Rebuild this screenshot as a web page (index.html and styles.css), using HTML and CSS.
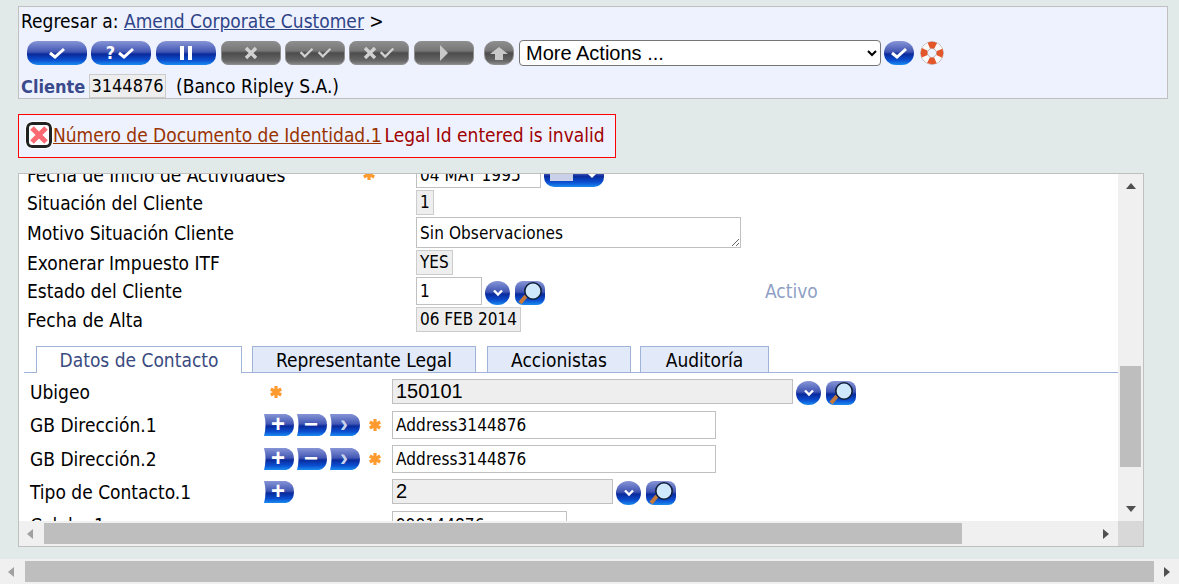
FILE: index.html
```html
<!DOCTYPE html>
<html>
	<head>
		<meta charset="utf-8">
		<title>Amend Corporate Customer</title>
		<link rel="stylesheet" href="styles.css">
	</head>
	<body>
		<svg class="sprite" width="0" height="0">
			<defs>
				<linearGradient id="blue-grad" x1="0" y1="0" x2="0" y2="1">
					<stop offset="0" stop-color="#8795d6"/>
					<stop offset="0.45" stop-color="#4257b4"/>
					<stop offset="0.55" stop-color="#0a2a9c"/>
					<stop offset="0.8" stop-color="#0b4fd0"/>
					<stop offset="1" stop-color="#1a8cf0"/>
				</linearGradient>
			</defs>
			<symbol id="check" viewBox="0 0 20 14"><path d="M3 7l5 4 9-8" fill="none" stroke="#fff" stroke-width="3"/></symbol>
			<symbol id="check-grey" viewBox="0 0 20 14"><path d="M3 6l5 5 9-9" fill="none" stroke="#cfcfcf" stroke-width="2.6"/></symbol>
			<symbol id="cross" viewBox="0 0 14 14"><path d="M2 2l10 10M12 2L2 12" fill="none" stroke="#d0d0d0" stroke-width="3.4"/></symbol>
			<symbol id="star" viewBox="0 0 14 14"><path d="M7 1v12M1.8 4l10.4 6M12.2 4L1.8 10" fill="none" stroke="#ff9a2e" stroke-width="3.2"/></symbol>
			<symbol id="chevron" viewBox="0 0 14 10"><path d="M3 2.5l4 4 4-4" fill="none" stroke="#fff" stroke-width="2.4"/></symbol>
			<symbol id="lens" viewBox="0 0 30 24">
				<path d="M11 15l-6 7" stroke="#c9793a" stroke-width="4"/>
				<circle cx="18" cy="10" r="8.2" fill="#cfe8fb" stroke="#10203c" stroke-width="1.6"/>
			</symbol>
			<symbol id="tab-shape" viewBox="0 0 30 24"><path d="M0 1h22q8 2 8 11t-8 11H0q3-11 0-22z" fill="url(#blue-grad)"/></symbol>
			<symbol id="buoy" viewBox="0 0 24 24">
				<circle cx="12" cy="12" r="11.3" fill="none" stroke="#b9aca6" stroke-width="1"/>
				<circle cx="12" cy="12" r="4.6" fill="none" stroke="#b9aca6" stroke-width="1"/>
				<circle cx="12" cy="12" r="8" fill="none" stroke="#fafafa" stroke-width="6"/>
				<circle cx="12" cy="12" r="8" fill="none" stroke="#e2562a" stroke-width="6.4" stroke-dasharray="7 5.57" stroke-dashoffset="3.5"/>
			</symbol>
		</svg>

		<div class="top-box">
			<div class="crumb">Regresar a: <a href="#" class="crumb-link">Amend Corporate Customer</a> &gt;</div>
			<div class="toolbar">
				<span class="pill blue"><svg width="20" height="14"><use href="#check"/></svg></span>
				<span class="pill blue"><span class="q">?</span><svg width="20" height="14"><use href="#check"/></svg></span>
				<span class="pill blue nudge"><span class="pause"></span></span>
				<span class="pill grey nudge"><svg width="14" height="14"><use href="#cross"/></svg></span>
				<span class="pill grey"><svg width="17" height="14"><use href="#check-grey"/></svg><svg width="17" height="14"><use href="#check-grey"/></svg></span>
				<span class="pill grey"><svg width="14" height="14"><use href="#cross"/></svg><svg width="18" height="14"><use href="#check-grey"/></svg></span>
				<span class="pill grey nudge"><span class="play"></span></span>
				<span class="pill grey round up-btn"><span class="up-arrow"></span></span>
				<select class="more-select"><option>More Actions ...</option></select>
				<span class="pill blue round go-btn"><svg width="20" height="14"><use href="#check"/></svg></span>
				<svg class="buoy" width="24" height="24"><use href="#buoy"/></svg>
			</div>
			<div class="client-row">
				<span class="client-label">Cliente</span>
				<span class="client-id">3144876</span>
				<span class="client-name">(Banco Ripley S.A.)</span>
			</div>
		</div>

		<div class="error-box">
			<span class="error-icon"><svg width="20" height="20" viewBox="0 0 20 20"><path d="M3 3l14 14M17 3L3 17" stroke="#fb6a72" stroke-width="5"/></svg></span>
			<a href="#" class="error-link">Número de Documento de Identidad.1</a>
			<span class="error-text">Legal Id entered is invalid</span>
		</div>

		<div class="panel">
			<div class="view">
				<div class="upper">
					<div class="row clipped">
						<span class="lbl">Fecha de Inicio de Actividades</span>
						<span class="mid"><svg class="star" width="14" height="14"><use href="#star"/></svg></span>
						<span class="val">
							<input class="inp w125" value="04 MAY 1995" readonly>
							<span class="pill blue cal"><span class="cal-sheet"></span><span class="cal-drop"></span></span>
						</span>
					</div>
					<div class="row h25">
						<span class="lbl">Situación del Cliente</span><span class="mid"></span>
						<span class="val"><span class="ro">1</span></span>
					</div>
					<div class="row h31">
						<span class="lbl">Motivo Situación Cliente</span><span class="mid"></span>
						<span class="val"><textarea class="motivo" readonly>Sin Observaciones</textarea></span>
					</div>
					<div class="row h25">
						<span class="lbl">Exonerar Impuesto ITF</span><span class="mid"></span>
						<span class="val"><span class="ro">YES</span></span>
					</div>
					<div class="row h28">
						<span class="lbl">Estado del Cliente</span><span class="mid"></span>
						<span class="val">
							<input class="inp w66" value="1" readonly>
							<span class="pill blue round drop"><svg width="14" height="10"><use href="#chevron"/></svg></span>
							<span class="pill blue mag"><svg width="30" height="24"><use href="#lens"/></svg></span>
							<span class="activo">Activo</span>
						</span>
					</div>
					<div class="row h25">
						<span class="lbl">Fecha de Alta</span><span class="mid"></span>
						<span class="val"><span class="ro">06 FEB 2014</span></span>
					</div>
				</div>

				<div class="tabs">
					<span class="tab active t1">Datos de Contacto</span>
					<span class="tab t2">Representante Legal</span>
					<span class="tab t3">Accionistas</span>
					<span class="tab t4">Auditoría</span>
				</div>

				<div class="lower">
					<div class="row2 h26">
						<span class="lbl">Ubigeo</span>
						<span class="mid2"><svg class="star first" width="14" height="14"><use href="#star"/></svg></span>
						<span class="val2">
							<span class="ro-big w401">150101</span>
							<span class="pill blue round drop"><svg width="14" height="10"><use href="#chevron"/></svg></span>
							<span class="pill blue mag"><svg width="30" height="24"><use href="#lens"/></svg></span>
						</span>
					</div>
					<div class="row2 h28">
						<span class="lbl">GB Dirección.1</span>
						<span class="mid2">
							<span class="tab-btn"><svg width="30" height="24"><use href="#tab-shape"/></svg><span class="tab-glyph">+</span></span>
							<span class="tab-btn"><svg width="30" height="24"><use href="#tab-shape"/></svg><span class="tab-glyph">−</span></span>
							<span class="tab-btn"><svg width="30" height="24"><use href="#tab-shape"/></svg><span class="tab-glyph dim">›</span></span>
							<svg class="star" width="14" height="14"><use href="#star"/></svg>
						</span>
						<span class="val2"><input class="inp w324" value="Address3144876" readonly></span>
					</div>
					<div class="row2 h28">
						<span class="lbl">GB Dirección.2</span>
						<span class="mid2">
							<span class="tab-btn"><svg width="30" height="24"><use href="#tab-shape"/></svg><span class="tab-glyph">+</span></span>
							<span class="tab-btn"><svg width="30" height="24"><use href="#tab-shape"/></svg><span class="tab-glyph">−</span></span>
							<span class="tab-btn"><svg width="30" height="24"><use href="#tab-shape"/></svg><span class="tab-glyph dim">›</span></span>
							<svg class="star" width="14" height="14"><use href="#star"/></svg>
						</span>
						<span class="val2"><input class="inp w324" value="Address3144876" readonly></span>
					</div>
					<div class="row2 h26">
						<span class="lbl">Tipo de Contacto.1</span>
						<span class="mid2">
							<span class="tab-btn"><svg width="30" height="24"><use href="#tab-shape"/></svg><span class="tab-glyph">+</span></span>
						</span>
						<span class="val2">
							<span class="ro-big w221">2</span>
							<span class="pill blue round drop"><svg width="14" height="10"><use href="#chevron"/></svg></span>
							<span class="pill blue mag"><svg width="30" height="24"><use href="#lens"/></svg></span>
						</span>
					</div>
					<div class="row2 h28">
						<span class="lbl">Celular.1</span>
						<span class="mid2"></span>
						<span class="val2"><input class="inp w175" value="999144876" readonly></span>
					</div>
				</div>
			</div>

			<div class="vbar">
				<span class="arrow arrow-up"></span>
				<span class="vtrack"><span class="vthumb"></span></span>
				<span class="arrow arrow-down"></span>
			</div>
			<div class="hbar">
				<span class="arrow arrow-left"></span>
				<span class="htrack"><span class="hthumb"></span></span>
				<span class="arrow arrow-right"></span>
			</div>
			<div class="corner"></div>
		</div>

		<div class="page-bar">
			<span class="arrow arrow-left"></span>
			<span class="page-thumb"></span>
			<span class="arrow arrow-right"></span>
		</div>
	</body>
</html>
```

FILE: styles.css
```css
html, body {
	margin: 0;
	height: 584px;
	overflow: hidden;
}

body {
	background: #e1eae8;
	font-family: "DejaVu Sans Condensed", "DejaVu Sans", sans-serif;
	font-size: 19px;
	color: #000000;
	display: flex;
	flex-direction: column;
}

.sprite {
	display: block;
}

/* top box */
.top-box {
	box-sizing: border-box;
	width: 1150px;
	height: 93px;
	margin: 6px 0 0 18px;
	background: #eef2fe;
	border: solid 1px #c0c0c0;
	padding: 0 0 0 2px;
}

.crumb {
	height: 28px;
	line-height: 28px;
}

.crumb-link {
	color: #2f4488;
}

.toolbar {
	display: flex;
	align-items: center;
	height: 26px;
	margin: 5px 0 0 6px;
	gap: 4px;
}

.pill {
	display: inline-flex;
	align-items: center;
	justify-content: center;
	gap: 1px;
	box-sizing: border-box;
	width: 60px;
	height: 24px;
	border-radius: 10px;
	flex: none;
}

.nudge {
	margin-left: 1px;
}

.blue {
	background: linear-gradient(#8795d6 0, #4257b4 45%, #0a2a9c 55%, #0b4fd0 80%, #1a8cf0 100%);
}

.grey {
	border-radius: 7px;
	border: solid 1px #8e8e8e;
	background: linear-gradient(#8c8c8c 0, #777777 40%, #4c4c4c 50%, #666666 85%, #858585 100%);
}

.round {
	width: 30px;
	border-radius: 12px;
}

.up-btn {
	margin-left: 6px;
	border-radius: 10px;
}

.q {
	color: #ffffff;
	font-weight: 700;
	font-size: 18px;
	line-height: 20px;
}

.pause {
	width: 4px;
	height: 14px;
	border-left: solid 4px #ffffff;
	border-right: solid 4px #ffffff;
}

.play {
	border-left: solid 8px #c8c8c8;
	border-top: solid 8px transparent;
	border-bottom: solid 8px transparent;
}

.up-arrow {
	width: 8px;
	height: 6px;
	background: #c8c8c8;
	margin-top: 7px;
	position: relative;
}

.up-arrow::before {
	content: "";
	position: absolute;
	left: -5px;
	top: -7px;
	border-bottom: solid 7px #c8c8c8;
	border-left: solid 9px transparent;
	border-right: solid 9px transparent;
}

.more-select {
	width: 362px;
	height: 26px;
	margin-left: 1px;
	padding: 0 0 0 2px;
	font-family: "Liberation Sans", sans-serif;
	font-size: 20px;
	background: #ffffff;
	border: solid 1px #767676;
	border-radius: 4px;
}

.go-btn {
	margin-left: -1px;
}

.buoy {
	flex: none;
	margin-left: 2px;
}

.client-row {
	display: flex;
	align-items: center;
	height: 24px;
	margin-top: 8px;
}

.client-label {
	color: #3a4a8c;
	font-weight: 700;
	font-size: 18px;
	width: 68px;
}

.client-id {
	box-sizing: border-box;
	width: 77px;
	height: 24px;
	line-height: 22px;
	font-size: 18px;
	text-align: center;
	background: #eeeeee;
	border: solid 1px #cccccc;
}

.client-name {
	margin-left: 10px;
}

/* error box */
.error-box {
	box-sizing: border-box;
	display: flex;
	align-items: center;
	width: 598px;
	height: 44px;
	margin: 15px 0 0 18px;
	background: #eef2fe;
	border: solid 1px #ff0000;
	padding: 0 0 2px 7px;
}

.error-icon {
	display: flex;
	align-items: center;
	justify-content: center;
	box-sizing: border-box;
	width: 26px;
	height: 26px;
	background: #ffffff;
	border: solid 3px #222222;
	border-radius: 6px;
	outline: solid 1px #ffffff;
	margin-right: 1px;
}

.error-link {
	color: #993300;
}

.error-text {
	color: #a00000;
	margin-left: 3px;
}

/* main panel */
.panel {
	box-sizing: border-box;
	display: grid;
	grid-template-columns: 1099px 25px;
	grid-template-rows: 347px 25px;
	width: 1126px;
	height: 374px;
	margin: 15px 0 0 18px;
	background: #ffffff;
	border: solid 1px #c0c0c0;
}

.view {
	overflow: hidden;
}

.upper {
	display: flex;
	flex-direction: column;
	gap: 2px;
	padding-left: 8px;
}

.row {
	display: grid;
	grid-template-columns: 335px 54px 1fr;
	align-items: center;
}

.row2 {
	display: grid;
	grid-template-columns: 234px 128px 1fr;
	align-items: center;
}

.clipped {
	height: 27px;
	margin-top: -13px;
}

.h25 { height: 25px; }
.h26 { height: 26px; }
.h28 { height: 28px; }
.h31 { height: 31px; }

.lbl {
	white-space: nowrap;
}

.mid {
	display: flex;
	align-items: flex-start;
	height: 100%;
}

.mid .star {
	margin: 6px 0 0 0;
}

.mid2 {
	display: flex;
	align-items: center;
	gap: 3px;
}

.star {
	flex: none;
	margin-left: 5px;
}

.val, .val2 {
	display: flex;
	align-items: center;
	height: 100%;
}

.inp {
	box-sizing: border-box;
	height: 100%;
	padding: 0 3px;
	font-family: inherit;
	font-size: 17px;
	letter-spacing: 0.1px;
	color: #000000;
	background: #ffffff;
	border: solid 1px #c0c0c0;
	outline: none;
}

.w125 { width: 125px; height: 26px; }
.w66 { width: 66px; }
.w324 { width: 324px; }
.w175 { width: 175px; }

.ro {
	box-sizing: border-box;
	height: 25px;
	line-height: 23px;
	padding: 0 3px;
	font-size: 17px;
	background: #eeeeee;
	border: solid 1px #cccccc;
}

.row .val .ro {
	min-width: 18px;
}

.motivo {
	box-sizing: border-box;
	width: 325px;
	height: 31px;
	padding: 5px 3px 0;
	font-family: inherit;
	font-size: 17px;
	letter-spacing: 0.1px;
	border: solid 1px #c0c0c0;
	outline: none;
}

.cal {
	margin-left: 3px;
	justify-content: flex-start;
	gap: 10px;
	padding-left: 6px;
}

.cal-sheet {
	width: 23px;
	height: 16px;
	margin-top: -4px;
	background: #c9d0e8;
}

.cal-drop {
	margin-top: -2px;
	border-top: solid 9px #ffffff;
	border-left: solid 9px transparent;
	border-right: solid 9px transparent;
}

.drop {
	width: 25px;
	margin-left: 3px;
	align-self: flex-end;
}

.mag {
	width: 30px;
	margin-left: 5px;
	border-radius: 8px;
	align-self: flex-end;
}

.activo {
	margin-left: 220px;
	color: #8f9fc5;
}

.ro-big {
	box-sizing: border-box;
	height: 25px;
	line-height: 23px;
	padding: 0 3px;
	font-family: "Liberation Sans", sans-serif;
	font-size: 20px;
	background: #eeeeee;
	border: solid 1px #c0c0c0;
	align-self: flex-start;
}

.w401 { width: 401px; }
.w221 { width: 221px; }

/* tabs */
.tabs {
	display: flex;
	align-items: flex-end;
	height: 27px;
	margin: 14px 0 0 5px;
	padding-left: 12px;
	border-bottom: solid 1px #9fb2d8;
	box-sizing: border-box;
}

.tab {
	box-sizing: border-box;
	height: 26px;
	line-height: 26px;
	text-align: center;
	background: #e2eafa;
	border: solid 1px #9fb2d8;
	border-bottom: none;
}

.tab.active {
	height: 27px;
	margin-bottom: -1px;
	background: #ffffff;
	color: #3a4a80;
}

.t1 { width: 206px; }
.t2 { width: 224px; margin-left: 10px; }
.t3 { width: 144px; margin-left: 11px; }
.t4 { width: 129px; margin-left: 9px; }

.lower {
	display: flex;
	flex-direction: column;
	gap: 6px;
	padding: 6px 0 0 11px;
}

.tab-btn {
	display: inline-flex;
	width: 30px;
	height: 24px;
	position: relative;
	flex: none;
}

.tab-glyph {
	position: absolute;
	left: 0;
	right: 2px;
	top: -1px;
	text-align: center;
	font-family: "Liberation Sans", sans-serif;
	font-size: 24px;
	line-height: 24px;
	font-weight: 700;
	color: #ffffff;
}

.tab-glyph.dim {
	color: #c9d3ec;
}

/* scrollbars */
.vbar, .hbar, .page-bar {
	display: flex;
	align-items: center;
	background: #f0f0f0;
}

.vbar {
	flex-direction: column;
}

.arrow {
	flex: none;
	display: flex;
	width: 0;
	height: 0;
}

.arrow-up {
	margin-top: 9px;
	border-bottom: solid 6px #505050;
	border-left: solid 5px transparent;
	border-right: solid 5px transparent;
}

.arrow-down {
	margin-bottom: 9px;
	border-top: solid 6px #505050;
	border-left: solid 5px transparent;
	border-right: solid 5px transparent;
}

.arrow-left {
	margin-left: 8px;
	border-right: solid 6px #a0a0a0;
	border-top: solid 5px transparent;
	border-bottom: solid 5px transparent;
}

.arrow-right {
	margin-right: 9px;
	border-left: solid 6px #505050;
	border-top: solid 5px transparent;
	border-bottom: solid 5px transparent;
}

.vtrack {
	flex: 1;
	align-self: stretch;
	padding: 177px 2px 0;
}

.vthumb {
	display: block;
	height: 101px;
	background: #bebebe;
}

.hbar {
	padding: 2px 0;
	box-sizing: border-box;
}

.htrack {
	flex: 1;
	align-self: stretch;
	padding-left: 11px;
}

.hthumb {
	display: block;
	width: 918px;
	height: 100%;
	background: #bebebe;
}

.corner {
	background: #d8d8d8;
}

.page-bar {
	box-sizing: border-box;
	height: 25px;
	margin-top: 12px;
	padding: 2px 0;
}

.page-thumb {
	flex: 1;
	align-self: stretch;
	margin: 0 10px 0 11px;
	background: #bebebe;
}
```
